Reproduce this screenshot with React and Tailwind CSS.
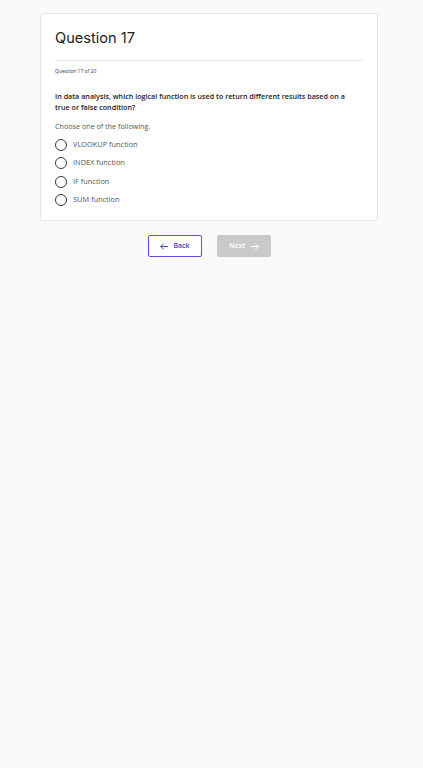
import { useState } from "react";

const options = ["VLOOKUP function", "INDEX function", "IF function", "SUM function"];

const Arrow = ({ dir = "left", color }) => (
  <svg width="8" height="7" viewBox="0 0 8 7" fill="none" stroke={color} strokeWidth="1" strokeLinecap="round" strokeLinejoin="round">
    {dir === "left" ? (
      <path d="M7.5 3.5H0.8M3.5 0.8L0.8 3.5L3.5 6.2" />
    ) : (
      <path d="M0.5 3.5H7.2M4.5 0.8L7.2 3.5L4.5 6.2" />
    )}
  </svg>
);

const Radio = ({ label, checked, onSelect }) => (
  <label className="flex items-center h-[18.5px] cursor-pointer" onClick={onSelect}>
    <span className="w-[12px] h-[12px] rounded-full border-[1.5px] border-[#3a3a3a] flex items-center justify-center">
      {checked && <span className="w-[6px] h-[6px] rounded-full bg-[#3a3a3a]" />}
    </span>
    <span className="ml-[6px] text-[7.4px] text-[#555]">{label}</span>
  </label>
);

const App = () => {
  const [selected, setSelected] = useState(null);

  return (
    <div
      className="min-h-[768px] bg-[#fafafa] pt-[13px]"
      style={{ fontFamily: "'Open Sans', sans-serif" }}
    >
      <div className="mx-[40px] w-[338px] bg-white border border-[#e6e6e6] rounded-[3px] px-[14px] pt-[16px] pb-[11px]">
        <h1
          className="text-[14.6px] leading-[17px] text-[#222] pb-[13px] border-b border-[#e8e8e8]"
          style={{ fontFamily: "Inter, sans-serif" }}
        >
          Question 17
        </h1>
        <p className="mt-[7px] text-[5px] text-[#333]">Question 17 of 20</p>

        <p className="mt-[15px] pr-[8px] text-[7.2px] leading-[11px] font-semibold text-[#222]">
          In data analysis, which logical function is used to return different results based on a true
          or false condition?
        </p>
        <p className="mt-[8px] text-[7.2px] text-[#555]">Choose one of the following.</p>

        <div className="mt-[4px] flex flex-col">
          {options.map((opt, i) => (
            <Radio key={opt} label={opt} checked={selected === i} onSelect={() => setSelected(i)} />
          ))}
        </div>
      </div>

      <div className="mt-[14px] pr-[4px] flex justify-center gap-[15px]">
        <button className="w-[54px] h-[22px] border border-[#5b50e0] rounded-[2px] bg-white text-[#4a40c8] text-[7px] font-semibold flex items-center justify-center gap-[5px]">
          <Arrow dir="left" color="#4a40c8" />
          Back
        </button>
        <button className="w-[54px] h-[22px] rounded-[2px] bg-[#c9c9c9] text-white text-[7px] font-semibold flex items-center justify-center gap-[6px]">
          Next
          <Arrow dir="right" color="#ffffff" />
        </button>
      </div>
    </div>
  );
};

export default App;
